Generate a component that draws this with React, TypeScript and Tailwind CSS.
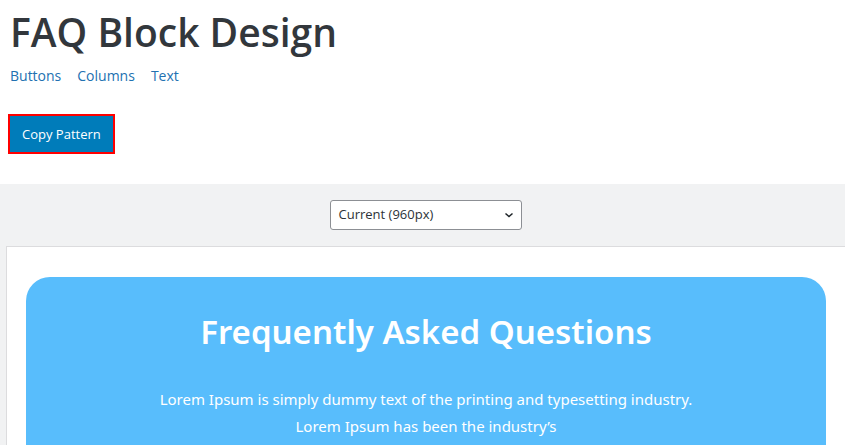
export default function App() {
  return (
    <div className="min-h-[445px] bg-white font-['Open_Sans',sans-serif]">
      <div className="px-[10px] pt-[6px]">
        <h1 className="text-[39px] font-semibold leading-[52px] text-[#32373c]">FAQ Block Design</h1>
        <div className="mt-[7px] flex gap-4 text-[14px] leading-[22px] text-[#2271b1]">
          <a>Buttons</a>
          <a>Columns</a>
          <a>Text</a>
        </div>
        <button className="ml-[-2px] mt-[27px] border-2 border-[#ff0000] bg-[#007cba] px-3 py-[9px] text-[13px] leading-[18px] text-white">
          Copy Pattern
        </button>
      </div>
      <div className="mt-[30px] bg-[#f1f2f3] pl-[6px] pt-[16px]">
        <div className="flex justify-center pb-[16px]">
          <div className="flex h-[30px] w-[192px] items-center justify-between rounded-[3px] border border-[#8c8f94] bg-white pl-2 pr-[7px] text-[13px] text-[#2c3338]">
            <span>Current (960px)</span>
            <svg width="10" height="10" viewBox="0 0 10 10" fill="none" stroke="#1d2327" strokeWidth="1.5">
              <path d="M1.5 3.5 L5 6.5 L8.5 3.5" />
            </svg>
          </div>
        </div>
        <div className="border border-r-0 border-[#dcdcde] bg-white px-[19px] pt-[30px]">
          <div className="rounded-[24px] bg-[#58bdfc] pb-8 pt-[33px] text-center text-white font-['Noto_Sans',sans-serif]">
            <h2 className="text-[33px] font-semibold leading-[44px]">Frequently Asked Questions</h2>
            <p className="mt-[32px] text-[15px] leading-[27px]">
              Lorem Ipsum is simply dummy text of the printing and typesetting industry.
              <br />
              Lorem Ipsum has been the industry’s
            </p>
          </div>
        </div>
      </div>
    </div>
  );
}
